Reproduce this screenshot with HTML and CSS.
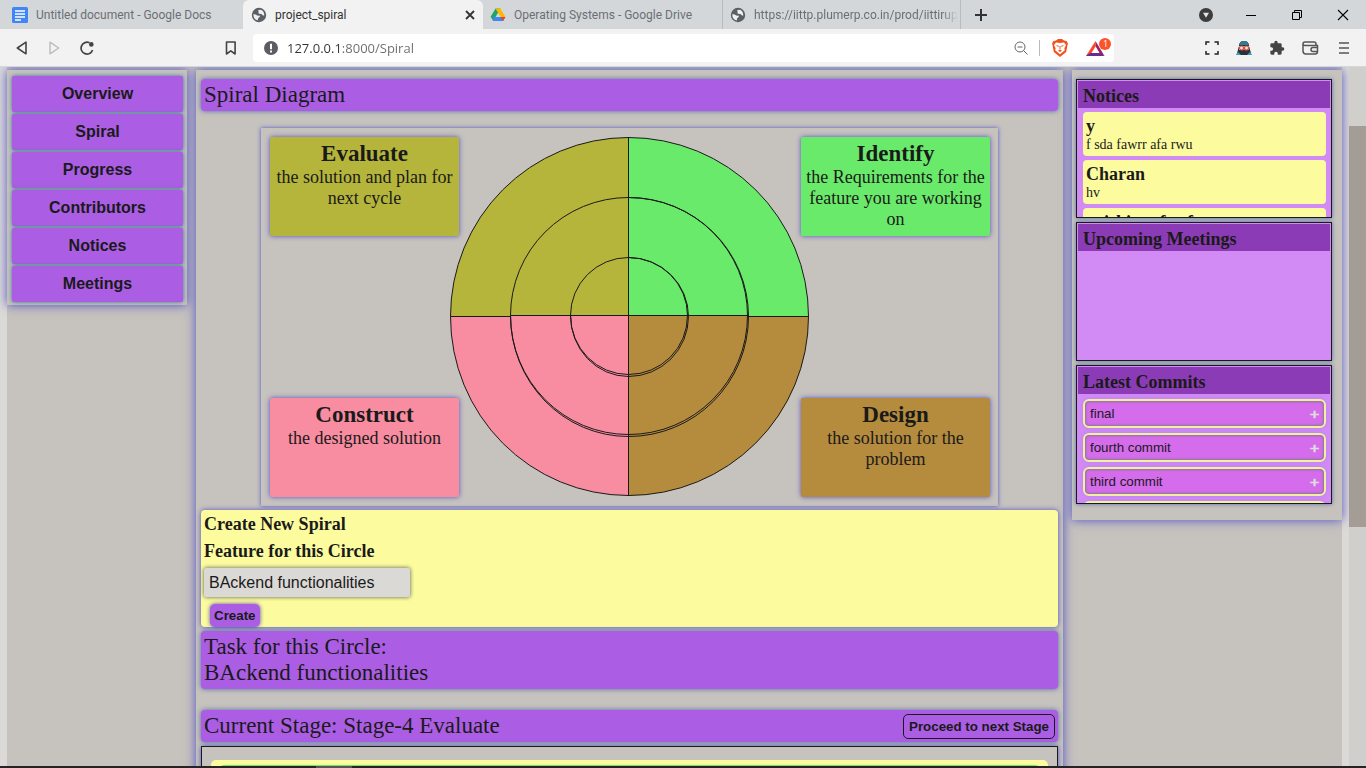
FILE: index.html
```html
<!DOCTYPE html>
<html lang="en">
<head>
<meta charset="utf-8">
<title>project_spiral</title>
<link rel="stylesheet" href="styles.css">
</head>
<body>
<svg class="defs" width="0" height="0" aria-hidden="true">
  <symbol id="globe" viewBox="0 0 16 16">
    <circle cx="8" cy="8" r="7.2" fill="#5c6065"/>
    <path d="M2.2 7.2 Q4.5 6.8 6.2 8.6 Q7.6 8.8 8.6 8.6 Q9.6 9.6 8 10.4 Q6.6 11 6.8 13.6 Q2.4 12.4 2.2 7.2Z" fill="#eef0f1"/>
    <path d="M7 3.4 Q10.4 1.8 12.6 5 L13.4 8.2 Q11.6 9 11 7.2 Q9.6 6.6 8 6.8 Q6.6 5.8 7.8 5 Z" fill="#eef0f1"/>
  </symbol>
</svg>
<header class="tabs">
  <div class="tab tab-docs">
    <svg width="16" height="16" viewBox="0 0 16 16"><rect width="16" height="16" rx="1.5" fill="#4285f4"/><path d="M3 4h10M3 7h10M3 10h10M3 13h6" stroke="#fff" stroke-width="1.5"/></svg>
    <span>Untitled document - Google Docs</span>
  </div>
  <div class="tab active">
    <svg width="16" height="16"><use href="#globe"/></svg>
    <span>project_spiral</span>
    <button class="plain close" aria-label="Close tab"><svg width="10" height="10" viewBox="0 0 10 10"><path d="M1 1l8 8M9 1l-8 8" stroke="#333" stroke-width="1.8"/></svg></button>
  </div>
  <div class="tab">
    <svg width="16" height="16" viewBox="0 0 16 16"><path d="M5.6 1.5h4.8L8 5.8 3.2 14 .6 9.8z" fill="#1fa463"/><path d="M5.6 1.5h4.8l5 8.4h-4.9z" fill="#ffba00"/><path d="M3.3 9.9h12.1L13 14H3z" fill="#4285f4"/><path d="M10.6 9.9h4.8L13 14z" fill="#ea4335"/></svg>
    <span>Operating Systems - Google Drive</span>
  </div>
  <div class="tab divided">
    <svg width="16" height="16"><use href="#globe"/></svg>
    <span class="fade">https://iittp.plumerp.co.in/prod/iittirup</span>
  </div>
  <button class="plain new-tab" aria-label="New tab"><svg width="12" height="12" viewBox="0 0 12 12"><path d="M6 0v12M0 6h12" stroke="#333" stroke-width="2"/></svg></button>
  <div class="window-controls">
    <svg width="14" height="14" viewBox="0 0 14 14"><circle cx="7" cy="7" r="7" fill="#3c3c3c"/><path d="M4 4.800h6L7 9.800z" fill="#e4e4e4"/></svg>
    <svg width="12" height="12" viewBox="0 0 12 12"><path d="M1 6.500h10" stroke="#000"/></svg>
    <svg width="12" height="12" viewBox="0 0 12 12" fill="none" stroke="#000"><path d="M1.500 3.500h7v7h-7zM3.500 3.500v-2h7v7h-2"/></svg>
    <svg width="12" height="12" viewBox="0 0 12 12"><path d="M1 1l10 10M11 1L1 11" stroke="#000" stroke-width="1.100"/></svg>
  </div>
</header>
<nav class="toolbar">
  <div class="nav-icons">
    <svg width="12" height="14" viewBox="0 0 12 14" fill="none" stroke="#444" stroke-width="1.600" stroke-linejoin="round"><path d="M10 1.200v11.600L1.300 7z"/></svg>
    <svg width="12" height="14" viewBox="0 0 12 14" fill="none" stroke="#bbb" stroke-width="1.400" stroke-linejoin="round"><path d="M2 1.200v11.600L10.700 7z"/></svg>
    <svg width="14" height="14" viewBox="0 0 14 14"><path d="M9.500 1.800A5.900 5.900 0 1 0 12.600 9" fill="none" stroke="#444" stroke-width="1.700"/><circle cx="11.300" cy="3.400" r="2.300" fill="#444"/></svg>
  </div>
  <svg class="bookmark" width="12" height="14" viewBox="0 0 12 14" fill="none" stroke="#444" stroke-width="1.600" stroke-linejoin="round"><path d="M1.500 1h8.600v12L5.800 9.800 1.500 13z"/></svg>
  <div class="address">
    <svg width="14" height="14" viewBox="0 0 14 14"><circle cx="7" cy="7" r="7" fill="#5a5d61"/><path d="M7 2.800v5.400M7 9.600v1.800" stroke="#fff" stroke-width="2"/></svg>
    <input type="text" aria-label="Address" value="127.0.0.1:8000/Spiral">
    <svg width="14" height="14" viewBox="0 0 14 14" fill="none" stroke="#666"><circle cx="6" cy="6" r="5"/><path d="M3.500 6h5M9.600 9.600l4 4"/></svg>
    <span class="rule"></span>
    <svg class="lion" width="16" height="18" viewBox="0 0 16 18"><path d="M4 1.500L6 0h4l2 1.500 2.500.5L16 4.500l-.6 2-1.200 6.500L8 18l-6.200-5L.6 6.500 0 4.500 1.500 2z" fill="#f4511e"/><path d="M4 3.500l4 .6 4-.6 2 2.500-1.600 3.200.4 2L8 15.200l-4.800-4 .4-2L2 6z" fill="#fff"/><path d="M4.600 6.600l2.200.7M11.400 6.600l-2.200.7" stroke="#f4511e" stroke-width="1"/><path d="M7.500 7h1v3h-1zM6 11.500l2-1 2 1-2 1.500z" fill="#f4511e"/></svg>
    <svg class="bat" width="26" height="20" viewBox="0 0 26 20"><path d="M9.500 3L0 18h5l4.500-7.500z" fill="#ff4724"/><path d="M9.500 3l9 15-5-2.500-4-7z" fill="#9e1f63"/><path d="M0 18l4-3h10l4.500 3z" fill="#662d91"/><path d="M9.500 8.500L5.500 15h8z" fill="#fff"/><circle cx="19" cy="6" r="6" fill="#fb542b"/><text x="17" y="9">1</text></svg>
  </div>
  <div class="extensions">
    <svg width="14" height="14" viewBox="0 0 14 14"><path d="M1 4V1h3.500M9.500 1H13v3M13 10v3H9.500M4.500 13H1v-3" fill="none" stroke="#222" stroke-width="1.500"/></svg>
    <svg width="16" height="16" viewBox="1 0 16 16"><path d="M4 6Q4 1 9 1t5 5l2.500 9h-15z" fill="#28323c"/><path d="M4.500 5Q5 1 9 1t4.500 4z" fill="#2f7f91"/><path d="M4 6h10v4H4z" fill="#f2c4b0"/><circle cx="6.500" cy="8" r="2" fill="#eee" stroke="#dc4b3e" stroke-width="1.200"/><circle cx="11.500" cy="8" r="2" fill="#eee" stroke="#dc4b3e" stroke-width="1.200"/><path d="M1 15l2-3 3 3zM17 15l-2-3-3 3z" fill="#38a3b3"/></svg>
    <svg width="16" height="16" viewBox="0 0 24 24"><path d="M20.500 11H19V7a2 2 0 0 0-2-2h-4V3.500a2.500 2.500 0 0 0-5 0V5H4a2 2 0 0 0-2 2v3.800h1.500a2.700 2.700 0 0 1 0 5.400H2V20a2 2 0 0 0 2 2h3.800v-1.500a2.700 2.700 0 0 1 5.400 0V22H17a2 2 0 0 0 2-2v-4h1.500a2.500 2.500 0 0 0 0-5z" fill="#444"/></svg>
    <svg width="17" height="14" viewBox="0 0 17 14" fill="none" stroke="#555" stroke-width="1.500"><path d="M14 4V3Q14 1 12 1H3Q1 1 1 3v7q0 3 3 3h9q2.500 0 2.500-2.500V4.500H3Q1 4.500 1 3"/><path d="M15.500 6.500H11a2 2 0 0 0 0 4h4.500"/></svg>
    <svg class="menu" width="10" height="14" viewBox="0 0 10 14"><path d="M0 2h10M0 7h10M0 12h10" stroke="#555" stroke-width="1.600"/></svg>
  </div>
</nav>
<div class="viewport">
  <div class="page">
    <nav class="panel sidebar">
      <button>Overview</button>
      <button>Spiral</button>
      <button>Progress</button>
      <button>Contributors</button>
      <button>Notices</button>
      <button>Meetings</button>
    </nav>
    <main class="panel content">
      <h1 class="bar">Spiral Diagram</h1>
      <section class="diagram">
        <div class="stages">
          <div class="stage evaluate"><h2>Evaluate</h2><p>the solution and plan for next cycle</p></div>
          <div class="stage construct"><h2>Construct</h2><p>the designed solution</p></div>
        </div>
        <svg class="wheel" width="360" height="360" viewBox="0 0 360 360" fill="none" stroke="#1a1a1a">
          <path d="M178.500 179.500V.5A178 179 0 0 0 .5 179.500z" fill="#b5b53b"/>
          <path d="M178.500 179.500V.5A180 179 0 0 1 358.500 179.500z" fill="#6aea6a"/>
          <path d="M178.500 179.500V358.500A178 179 0 0 1 .5 179.500z" fill="#f88ca0"/>
          <path d="M178.500 179.500V358.500A180 179 0 0 0 358.500 179.500z" fill="#b58b3d"/>
          <path d="M61 178.500H178v2H61z" fill="#f88ca0" stroke="none"/>
          <path d="M179 178.500H298v2H179z" fill="#b58b3d" stroke="none"/>
          <path d="M60.500 178.500h238M178.500 0v359"/>
          <path d="M60.500 178.500A118 118 0 0 1 178.500 60.500A119 118 0 0 1 297.500 178.500A119 119 0 0 1 178.500 297.500A118 119 0 0 1 60.500 178.500"/>
          <path d="M178.500 60.500A120 119 0 0 1 298.500 179.500A120 120 0 0 1 178.500 299.500A118 121 0 0 1 60.500 178.500"/>
          <path d="M120.500 178.500A58 58 0 0 1 178.500 120.500A59 58 0 0 1 237.500 178.500A59 59 0 0 1 178.500 237.500A58 59 0 0 1 120.500 178.500"/>
          <path d="M178.500 120.500A60 59 0 0 1 238.500 179.500A60 60 0 0 1 178.500 239.500A58 61 0 0 1 120.500 178.500"/>
        </svg>
        <div class="stages">
          <div class="stage identify"><h2>Identify</h2><p>the Requirements for the feature you are working on</p></div>
          <div class="stage design"><h2>Design</h2><p>the solution for the problem</p></div>
        </div>
      </section>
      <form class="create">
        <h3>Create New Spiral</h3>
        <label for="feature">Feature for this Circle</label>
        <input id="feature" type="text" value="BAckend functionalities">
        <button type="button">Create</button>
      </form>
      <div class="bar task">Task for this Circle:<br>BAckend functionalities</div>
      <div class="bar current"><span>Current Stage: Stage-4 Evaluate</span><button>Proceed to next Stage</button></div>
      <div class="stage-detail"><div class="detail-card"><div class="detail-inner"></div></div></div>
    </main>
    <aside class="panel feed">
      <section class="card">
        <h3>Notices</h3>
        <article class="notice"><h4>y</h4><p>f sda fawrr afa rwu</p></article>
        <article class="notice"><h4>Charan</h4><p>hv</p></article>
        <article class="notice"><h4>rnishitva fsu f</h4></article>
      </section>
      <section class="card">
        <h3>Upcoming Meetings</h3>
      </section>
      <section class="card">
        <h3>Latest Commits</h3>
        <button class="commit">final<span>&#x2795;&#xFE0E;</span></button>
        <button class="commit">fourth commit<span>&#x2795;&#xFE0E;</span></button>
        <button class="commit">third commit<span>&#x2795;&#xFE0E;</span></button>
        <button class="commit" aria-label="Older commit"></button>
      </section>
    </aside>
  </div>
  <div class="scrollbar"><div class="thumb"></div></div>
</div>
<footer class="taskbar"><div></div></footer>
</body>
</html>
```
FILE: styles.css
```css
* { box-sizing: border-box; }
body, h1, h2, h3, h4, p { margin: 0; }
body {
  height: 100vh;
  display: flex;
  flex-direction: column;
  overflow: hidden;
  color: #1a1a1a;
  font-family: "Liberation Serif", serif;
  background: #dcdad7;
}
svg { flex: none; display: block; }
.defs { position: absolute; }
.plain { border: 0; padding: 0; background: none; }

.tabs {
  flex: none;
  height: 29px;
  display: flex;
  align-items: center;
  background: #d4d7da;
  font: 12px Roboto, sans-serif;
  color: #6b6f73;
}
.tab {
  width: 239px;
  height: 29px;
  padding: 0 7px;
  display: flex;
  align-items: center;
  gap: 8px;
  white-space: nowrap;
}
.tab-docs { width: 243px; padding-left: 12px; }
.tab.active { width: 240px; padding: 0 8px; background: #f2f2f2; color: #333; border-radius: 6px 6px 0 0; }
.close { margin-left: auto; }
.divided { padding-right: 2px; border-left: 1px solid #b9bcbf; border-right: 1px solid #b9bcbf; }
.fade { mask-image: linear-gradient(90deg, #000 92%, transparent); }
.new-tab { margin-left: 14px; }
.window-controls {
  margin-left: auto;
  padding-right: 17px;
  display: flex;
  align-items: center;
  gap: 34px;
}
.window-controls svg:first-child { margin-right: -2px; }

.toolbar {
  flex: none;
  height: 38px;
  display: flex;
  align-items: center;
  background: #f2f2f2;
  border-bottom: 1px solid #d3d6da;
}
.nav-icons { display: flex; gap: 20px; padding-left: 16px; }
.bookmark { margin-left: 131px; }
.address {
  flex: 1;
  height: 28px;
  margin: 0 91px 0 16px;
  padding: 0 2px 0 11px;
  display: flex;
  align-items: center;
  gap: 9px;
  background: #fff;
  border-radius: 4px;
}
.address input {
  flex: 1;
  min-width: 0;
  padding: 0;
  border: 0;
  font: 13px "Open Sans", sans-serif;
  color: transparent;
  background: linear-gradient(90deg, #333 53px, #6b6b6b 53px);
  background-clip: text;
}
.address .rule { width: 1px; height: 16px; margin: 0 2px; background: #bbb; }
.bat { margin-left: 9px; font: 9px "Open Sans", sans-serif; fill: #fff; }
.lion { margin-left: 1px; }
.extensions { display: flex; align-items: center; gap: 17px; padding-right: 17px; }
.menu { margin-left: 3px; }

.viewport { flex: 1; min-height: 0; display: flex; overflow: hidden; }
.page {
  flex: 1;
  margin: 0 7px;
  padding-top: 3px;
  display: grid;
  grid-template-columns: 180px 1fr 270px;
  gap: 9px;
  align-items: start;
  background: #c6c2bd;
}
.panel { background: #c6c2bd; box-shadow: 0 0 10px #5050c8; }

.sidebar { padding: 6px 4px 3px 5px; display: grid; gap: 2px; }
.sidebar button {
  height: 36px;
  border: 0;
  border-radius: 2px;
  background: #ab5ee4;
  box-shadow: 0 0 4px #3d6f9c;
  color: #1a1a1a;
  font: bold 16px "Liberation Sans", sans-serif;
}

.content { padding: 9px 5px 0; }
.bar {
  padding: 3px;
  border-radius: 4px;
  background: #ab5ee4;
  box-shadow: 0 0 5px #4a6aa8;
  font-size: 23px;
  font-weight: normal;
  line-height: 26px;
}
.diagram {
  max-width: 737px;
  margin: 17px auto 4px;
  padding: 9px 8px 9px 9px;
  display: flex;
  justify-content: space-between;
  box-shadow: 0 0 4px #5050c8;
}
.wheel { margin: 0 -9px; }
.stages { width: 189px; display: flex; flex-direction: column; justify-content: space-between; }
.stage {
  height: 99px;
  padding: 4px;
  border-radius: 2px;
  box-shadow: 0 0 5px #5050c8;
  text-align: center;
}
.stage h2 { font-size: 23px; line-height: 26px; }
.stage p { font-size: 18px; line-height: 21px; }
.evaluate { background: #b5b53b; }
.identify { background: #6aea6a; }
.construct { background: #f88ca0; }
.design { background: #b58b3d; }

.create {
  padding: 2px 3px 0;
  display: flex;
  flex-direction: column;
  align-items: flex-start;
  border-radius: 4px;
  background: #fcfc9f;
  box-shadow: 0 0 5px #5050c8;
}
.create h3, .create label { font-size: 18px; font-weight: bold; line-height: 25px; }
.create label { margin-top: 2px; }
.create input {
  width: 206px;
  height: 29px;
  margin-top: 4px;
  padding: 0 5px;
  border: 0;
  border-radius: 2px;
  background: #dad9d6;
  box-shadow: 0 0 4px #555;
  color: #1a1a1a;
  font: 16px "Liberation Sans", sans-serif;
}
.create button {
  height: 23px;
  margin: 7px 0 0 6px;
  padding: 0 4px;
  border: 0;
  border-radius: 5px;
  background: #ab5ee4;
  box-shadow: 0 0 4px #5050a8;
  color: #1a1a1a;
  font-family: "Liberation Sans", sans-serif;
  font-weight: bold;
}
.task { margin-top: 4px; }
.current { margin-top: 21px; display: flex; justify-content: space-between; align-items: center; }
.current button {
  height: 25px;
  margin: 0;
  padding: 0 5px;
  border: 1px solid #1a1a1a;
  border-radius: 5px;
  background: none;
  color: #1a1a1a;
  font-family: "Liberation Sans", sans-serif;
  font-weight: bold;
}
.stage-detail { margin-top: 4px; padding: 13px 9px; border: 1px solid #1a1a1a; box-shadow: 0 0 5px #5050c8; }
.detail-card { padding: 5px 9px; border-radius: 5px; background: #fcfc9f; }
.detail-inner { height: 60px; border-radius: 4px; background: #6aea6a; }

.feed { padding: 9px 10px 16px 4px; display: grid; gap: 4px; }
.card {
  height: 139px;
  padding: 1px;
  overflow: hidden;
  border: 1px solid #1a1a1a;
  background: #d28af5;
  box-shadow: 0 0 4px #4a6aa8;
}
.card h3 { padding: 3px 5px 0; background: #8b3bb5; font-size: 18px; line-height: 24px; }
.notice {
  height: 44px;
  margin: 4px 4px 0 5px;
  padding: 4px 3px;
  border-radius: 4px;
  background: #fcfc9f;
}
.notice h4 { font-size: 18px; line-height: 20px; }
.notice p { font-size: 14px; line-height: 17px; }
.commit {
  width: 243px;
  height: 29px;
  margin: 5px 4px 0 5px;
  padding: 0 5px;
  display: flex;
  justify-content: space-between;
  align-items: center;
  border: 2px solid #f0f09f;
  border-radius: 6px;
  background: #d46ceb;
  box-shadow: inset 0 0 3px #3f7f3f, 0 0 4px #b880f8;
  color: #1a1a1a;
  font-family: "Liberation Sans", sans-serif;
}
.commit span { color: #ddd; font: bold 12px "DejaVu Sans", sans-serif; }

.scrollbar { width: 17px; padding-top: 59px; background: #d1cfcb; }
.thumb { height: 401px; background: #a39d96; }
.taskbar { flex: none; height: 2px; padding-left: 316px; background: #242424; }
.taskbar div { width: 36px; height: 2px; background: #555; }
```
